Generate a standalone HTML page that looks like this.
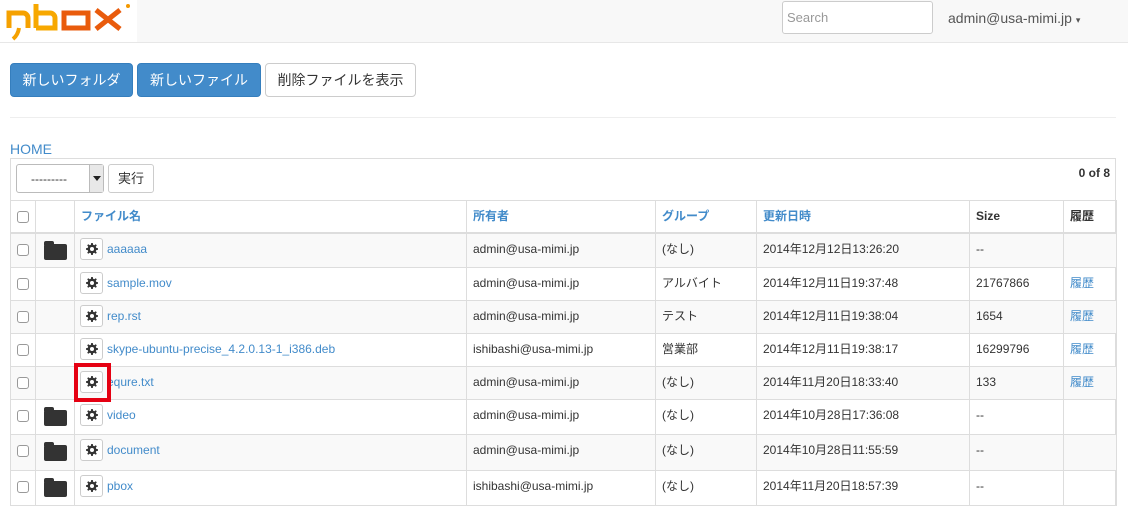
<!DOCTYPE html>
<html><head><meta charset="utf-8"><style>
*{box-sizing:border-box}
body{margin:0;width:1128px;height:528px;overflow:hidden;background:#fff;font-family:"Liberation Sans","Noto Sans CJK JP",sans-serif;font-size:12px;color:#333;position:relative}
.nav{position:absolute;left:0;top:0;width:1128px;height:43px;background:#f8f8f8;border-bottom:1px solid #e7e7e7}
.logo{position:absolute;left:0;top:0;width:137px;height:42px;background:#fff}
.search{position:absolute;left:782px;top:1px;width:151px;height:33px;border:1px solid #ccc;border-radius:3px;background:#fff;color:#999;font-size:13px;padding:8px 4px}
.user{position:absolute;left:948px;top:10px;font-size:14px;color:#555}
.btn{position:absolute;top:63px;height:34px;border-radius:4px;font-size:14px;line-height:32px;text-align:center}
.bp{background:#428bca;border:1px solid #357ebd;color:#fff}
.bd{background:#fff;border:1px solid #ccc;color:#333}
.hr{position:absolute;left:10px;top:117px;width:1106px;border-top:1px solid #eee}
.home{position:absolute;left:10px;top:141px;font-size:14px;line-height:16px;color:#428bca}
.panel{position:absolute;left:10px;top:158px;width:1106px;height:348px;border:1px solid #ddd}
.sel{position:absolute;left:16px;top:164px;width:88px;height:29px;border:1px solid #bbb;border-radius:3px;background:#fff;font-size:12px;line-height:14px;padding:7px 14px}
.sel .ar{position:absolute;right:0;top:0;width:14px;height:27px;background:#e8e8e8;border-left:1px solid #bbb}
.sel .ar:after{content:"";position:absolute;left:3px;top:11px;border:4px solid transparent;border-top:5px solid #222}
.go{position:absolute;left:108px;top:164px;width:46px;height:29px;border:1px solid #ccc;border-radius:3px;text-align:center;line-height:27px;font-size:13px}
.cnt{position:absolute;right:18px;top:166px;font-weight:bold;font-size:12px}
table{position:absolute;left:10px;top:200px;width:1106px;border-collapse:collapse;table-layout:fixed}
td,th{border:1px solid #ddd;padding:0 6px;vertical-align:top;text-align:left;padding-top:8px;white-space:nowrap;line-height:15px}
th{border-bottom:2px solid #ddd;color:#428bca;font-size:12px}
th.k{color:#333}
tr.s td{background:#f9f9f9}
a{color:#428bca;text-decoration:none}
.cb{display:inline-block;width:12px;height:12px;border:1px solid #999;border-radius:3px;background:#fff;margin-top:2px}
.fd{display:inline-block;width:23px;height:16px;background:#333;border-radius:2px;position:relative;margin:2px 0 0 2px}
.fd:before{content:"";position:absolute;left:0;top:-3px;width:10px;height:4px;background:#333;border-radius:2px 2px 0 0}
.gr{display:inline-block;width:23px;height:22px;border:1px solid #ccc;border-radius:3px;vertical-align:top;margin:-4px 4px 0 -1px;background:#fff;position:relative}
.gr svg{position:absolute;left:5px;top:4px}
</style></head><body>
<svg width="0" height="0" style="position:absolute"><defs><g id="g"><path d="M5.2 0h1.6l.3 1.7 1.2.5 1.4-1 1.1 1.1-1 1.4.5 1.2 1.7.3v1.6l-1.7.3-.5 1.2 1 1.4-1.1 1.1-1.4-1-1.2.5-.3 1.7H5.2l-.3-1.7-1.2-.5-1.4 1-1.1-1.1 1-1.4-.5-1.2L0 6.8V5.2l1.7-.3.5-1.2-1-1.4 1.1-1.1 1.4 1 1.2-.5z" fill="#333"/><circle cx="6" cy="6" r="2" fill="#fff"/></g></defs></svg>
<div class="nav"><div class="logo"><svg width="137" height="42" viewBox="0 0 137 42">
<path d="M9 28V13h14a5 5 0 0 1 5 5v10" fill="none" stroke="#f5a100" stroke-width="5"/>
<path d="M19 28q-1 7-6 11" fill="none" stroke="#f5a100" stroke-width="4"/>
<path d="M36 28V4M36 13h14a5 5 0 0 1 5 5v10H36" fill="none" stroke="#f7a800" stroke-width="5"/>
<rect x="64" y="13" width="24" height="15" fill="none" stroke="#e95b0c" stroke-width="5"/>
<path d="M96 10l24 19M120 10L96 29" stroke="#e95b0c" stroke-width="5"/>
<circle cx="128" cy="6" r="2" fill="#f39800"/></svg></div>
<div class="search">Search</div>
<div class="user">admin@usa-mimi.jp <span style="font-size:9px">&#9662;</span></div></div>
<div class="btn bp" style="left:10px;width:123px">新しいフォルダ</div>
<div class="btn bp" style="left:137px;width:124px">新しいファイル</div>
<div class="btn bd" style="left:265px;width:151px">削除ファイルを表示</div>
<div class="hr"></div>
<div class="home">HOME</div>
<div class="panel"></div>
<div class="sel">---------<div class="ar"></div></div>
<div class="go">実行</div>
<div class="cnt">0 of 8</div>
<table>
<colgroup><col style="width:25px"><col style="width:39px"><col style="width:392px"><col style="width:189px"><col style="width:101px"><col style="width:213px"><col style="width:94px"><col style="width:53px"></colgroup>
<tr style="height:32px"><th><span class="cb"></span></th><th></th><th>ファイル名</th><th>所有者</th><th>グループ</th><th>更新日時</th><th class="k">Size</th><th class="k">履歴</th></tr>
<tr class="s" style="height:35px"><td><span class="cb"></span></td><td><span class="fd"></span></td><td><span class="gr"><svg width="12" height="12"><use href="#g"/></svg></span><a>aaaaaa</a></td><td>admin@usa-mimi.jp</td><td>(なし)</td><td>2014年12月12日13:26:20</td><td>--</td><td></td></tr>
<tr style="height:33px"><td><span class="cb"></span></td><td></td><td><span class="gr"><svg width="12" height="12"><use href="#g"/></svg></span><a>sample.mov</a></td><td>admin@usa-mimi.jp</td><td>アルバイト</td><td>2014年12月11日19:37:48</td><td>21767866</td><td><a>履歴</a></td></tr>
<tr class="s" style="height:33px"><td><span class="cb"></span></td><td></td><td><span class="gr"><svg width="12" height="12"><use href="#g"/></svg></span><a>rep.rst</a></td><td>admin@usa-mimi.jp</td><td>テスト</td><td>2014年12月11日19:38:04</td><td>1654</td><td><a>履歴</a></td></tr>
<tr style="height:33px"><td><span class="cb"></span></td><td></td><td><span class="gr"><svg width="12" height="12"><use href="#g"/></svg></span><a>skype-ubuntu-precise_4.2.0.13-1_i386.deb</a></td><td>ishibashi@usa-mimi.jp</td><td>営業部</td><td>2014年12月11日19:38:17</td><td>16299796</td><td><a>履歴</a></td></tr>
<tr class="s" style="height:33px"><td><span class="cb"></span></td><td></td><td><span class="gr"><svg width="12" height="12"><use href="#g"/></svg></span><a>equre.txt</a></td><td>admin@usa-mimi.jp</td><td>(なし)</td><td>2014年11月20日18:33:40</td><td>133</td><td><a>履歴</a></td></tr>
<tr style="height:35px"><td><span class="cb"></span></td><td><span class="fd"></span></td><td><span class="gr"><svg width="12" height="12"><use href="#g"/></svg></span><a>video</a></td><td>admin@usa-mimi.jp</td><td>(なし)</td><td>2014年10月28日17:36:08</td><td>--</td><td></td></tr>
<tr class="s" style="height:36px"><td><span class="cb"></span></td><td><span class="fd"></span></td><td><span class="gr"><svg width="12" height="12"><use href="#g"/></svg></span><a>document</a></td><td>admin@usa-mimi.jp</td><td>(なし)</td><td>2014年10月28日11:55:59</td><td>--</td><td></td></tr>
<tr style="height:35px"><td><span class="cb"></span></td><td><span class="fd"></span></td><td><span class="gr"><svg width="12" height="12"><use href="#g"/></svg></span><a>pbox</a></td><td>ishibashi@usa-mimi.jp</td><td>(なし)</td><td>2014年11月20日18:57:39</td><td>--</td><td></td></tr>
</table>
<div style="position:absolute;left:74px;top:363px;width:37px;height:39px;border:4px solid #e50012"></div>
</body></html>
